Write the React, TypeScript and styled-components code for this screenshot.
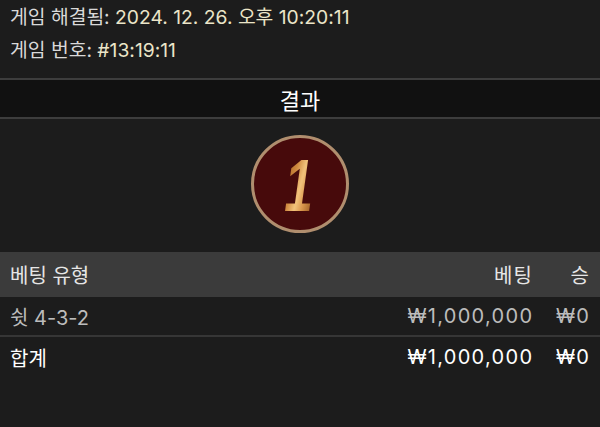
import styled, { createGlobalStyle } from "styled-components";

const GlobalStyle = createGlobalStyle`
  html, body {
    margin: 0;
    padding: 0;
    background-color: #1c1c1c;
  }
  body {
    font-family: Inter, "Noto Sans CJK KR", sans-serif;
  }
`;

const Wrapper = styled.div`
  width: 600px;
  height: 427px;
  overflow: hidden;
  background-color: #1c1c1c;
`;
const Info = styled.div`
  padding: 1px 10px 11px;
`;
const InfoLine = styled.div`
  height: 33px;
  line-height: 33px;
  font-size: 19.3px;
  color: #d9d9d9;
  white-space: nowrap;
`;
const InfoValue = styled.span`
  color: #ebe5c8;
`;
const SectionTitle = styled.div`
  height: 37px;
  display: flex;
  justify-content: center;
  align-items: center;
  background-color: #111111;
  border-top: 2px solid #3d3d3d;
  border-bottom: 2px solid #3d3d3d;
  color: #ffffff;
  font-size: 22px;
`;
const ResultArea = styled.div`
  display: flex;
  justify-content: center;
  padding: 16px 0 19px;
`;
const Ball = styled.div`
  width: 92px;
  height: 92px;
  border-radius: 50%;
  border: 3px solid #b08e6e;
  background-color: #470a0b;
  display: flex;
  justify-content: center;
  align-items: center;
`;
const BallNumber = styled.span`
  font-family: "Liberation Sans", sans-serif;
  font-weight: 700;
  font-size: 74px;
  line-height: 1;
  transform: translate(0px, 2px) skewX(-8deg) scaleX(0.7);
  background: linear-gradient(100deg, #a8601f 0%, #d08a40 30%, #f2c37c 52%, #d9964c 72%, #96561f 100%);
  -webkit-background-clip: text;
  background-clip: text;
  color: transparent;
`;
const Row = styled.div<{ $kind: "head" | "body" | "total" }>`
  display: grid;
  grid-template-columns: 1fr auto 36px;
  column-gap: 21px;
  align-items: center;
  padding: 0 11px 0 10px;
  height: ${(p) => (p.$kind === "head" ? "45px" : p.$kind === "body" ? "38px" : "40px")};
  background-color: ${(p) => (p.$kind === "head" ? "#3b3b3b" : "#1c1c1c")};
  border-bottom: ${(p) => (p.$kind === "body" ? "2px solid #363636" : "none")};
  color: ${(p) => (p.$kind === "body" ? "#bcbcbc" : p.$kind === "head" ? "#e6e6e6" : "#ffffff")};
  font-size: 20px;
  white-space: nowrap;
`;
const Cell = styled.div`
  text-align: left;
`;
const Amount = styled.div`
  text-align: right;
  letter-spacing: 1.3px;
  margin-right: -1.3px;
`;

const bets = [{ type: "쉿 4-3-2", bet: "₩1,000,000", win: "₩0" }];

export default function App() {
  return (
    <Wrapper>
      <GlobalStyle />
      <Info>
        <InfoLine>
          게임 해결됨: <InfoValue>2024. 12. 26. 오후 10:20:11</InfoValue>
        </InfoLine>
        <InfoLine>
          게임 번호: <InfoValue>#13:19:11</InfoValue>
        </InfoLine>
      </Info>
      <SectionTitle>결과</SectionTitle>
      <ResultArea>
        <Ball>
          <BallNumber>1</BallNumber>
        </Ball>
      </ResultArea>
      <Row $kind="head">
        <Cell>베팅 유형</Cell>
        <Amount>베팅</Amount>
        <Amount>승</Amount>
      </Row>
      {bets.map((b) => (
        <Row $kind="body" key={b.type}>
          <Cell>{b.type}</Cell>
          <Amount>{b.bet}</Amount>
          <Amount>{b.win}</Amount>
        </Row>
      ))}
      <Row $kind="total">
        <Cell>합계</Cell>
        <Amount>₩1,000,000</Amount>
        <Amount>₩0</Amount>
      </Row>
    </Wrapper>
  );
}
